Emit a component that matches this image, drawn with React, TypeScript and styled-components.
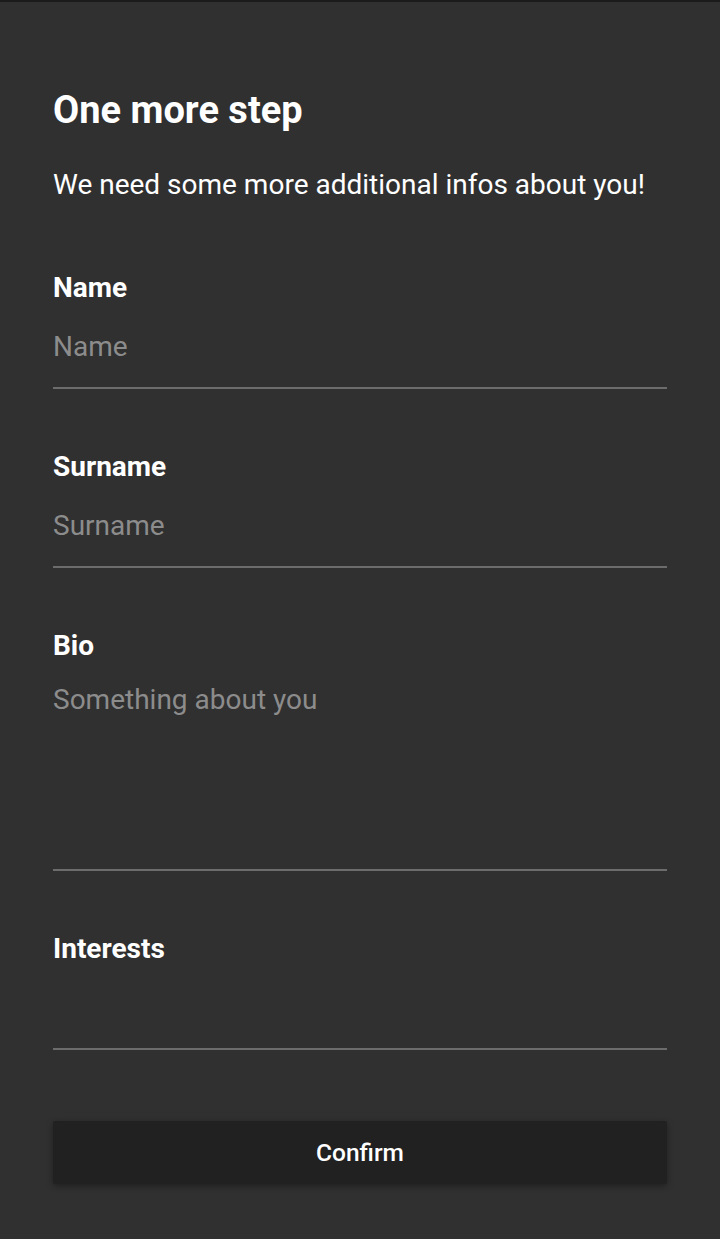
import styled, { createGlobalStyle } from "styled-components";

const fields = [
  { label: "Name", placeholder: "Name", multiline: false },
  { label: "Surname", placeholder: "Surname", multiline: false },
  { label: "Bio", placeholder: "Something about you", multiline: true },
  { label: "Interests", placeholder: "", multiline: false },
];

function App() {
  return (
    <Page>
      <GlobalStyle />
      <Title>One more step</Title>
      <Subtitle>We need some more additional infos about you!</Subtitle>
      <Form>
        {fields.map((field) => (
          <Field key={field.label}>
            <Label>{field.label}</Label>
            {field.multiline ? (
              <TextArea placeholder={field.placeholder} />
            ) : (
              <Input placeholder={field.placeholder} />
            )}
          </Field>
        ))}
      </Form>
      <Button>Confirm</Button>
    </Page>
  );
}

const GlobalStyle = createGlobalStyle`
  * {
    box-sizing: border-box;
  }
  body {
    margin: 0;
    background-color: #303030;
    font-family: Roboto, "Noto Sans", sans-serif;
  }
`;

const Page = styled.div`
  width: 720px;
  min-height: 1239px;
  background-color: #303030;
  border-top: 2px solid #1b1b1b;
  padding: 88px 53px 40px 53px;
  color: #ffffff;
  display: flex;
  flex-direction: column;
`;

const Title = styled.h1`
  margin: 0;
  font-size: 38px;
  line-height: 40px;
  font-weight: 700;
`;

const Subtitle = styled.p`
  margin: 39px 0 0 0;
  font-size: 28px;
  line-height: 32px;
  font-weight: 400;
`;

const Form = styled.div`
  margin-top: 73px;
  display: flex;
  flex-direction: column;
  gap: 64px;
`;

const Field = styled.div`
  display: flex;
  flex-direction: column;
`;

const Label = styled.label`
  font-size: 28px;
  line-height: 28px;
  font-weight: 700;
`;

const Input = styled.input`
  width: 100%;
  height: 87px;
  background: transparent;
  border: none;
  border-bottom: 2px solid #6c6c6c;
  outline: none;
  padding: 4px 0 0 0;
  color: #ffffff;
  font-family: Roboto, "Noto Sans", sans-serif;
  font-size: 28px;

  &::placeholder {
    color: #8c8c8c;
  }
`;

const TextArea = styled.textarea`
  width: 100%;
  height: 211px;
  background: transparent;
  border: none;
  border-bottom: 2px solid #6c6c6c;
  outline: none;
  resize: none;
  padding: 26px 0 0 0;
  color: #ffffff;
  font-family: Roboto, "Noto Sans", sans-serif;
  font-size: 28px;
  line-height: 28px;

  &::placeholder {
    color: #8c8c8c;
  }
`;

const Button = styled.button`
  margin-top: 71px;
  width: 100%;
  height: 63px;
  border: none;
  border-radius: 2px;
  background-color: #212121;
  color: #ffffff;
  font-family: Roboto, "Noto Sans", sans-serif;
  font-size: 24.5px;
  font-weight: 500;
  box-shadow: 0 2px 6px rgba(0, 0, 0, 0.35);
  cursor: pointer;
`;

export default App;
